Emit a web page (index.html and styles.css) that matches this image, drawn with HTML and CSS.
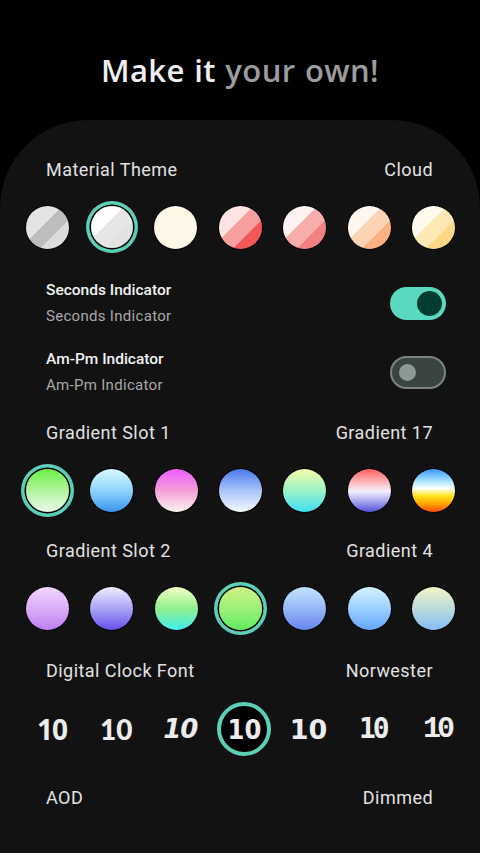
FILE: index.html
```html
<!DOCTYPE html>
<html>
<head>
<meta charset="utf-8">
<link rel="stylesheet" href="styles.css">
</head>
<body>
<header class="hero"><h1><span class="hl">Make it</span> <span class="dim">your own!</span></h1></header>
<main class="card">
  <div class="sec-head"><span>Material Theme</span><span>Cloud</span></div>
  <div class="swatches">
    <span class="sw t1"></span>
    <span class="sw t2 sel"></span>
    <span class="sw t3"></span>
    <span class="sw t4"></span>
    <span class="sw t5"></span>
    <span class="sw t6"></span>
    <span class="sw t7"></span>
  </div>

  <div class="toggle-row first">
    <div class="tt"><div class="title">Seconds Indicator</div><div class="sub">Seconds Indicator</div></div>
    <span class="switch on"><span class="knob"></span></span>
  </div>
  <div class="toggle-row">
    <div class="tt"><div class="title">Am-Pm Indicator</div><div class="sub">Am-Pm Indicator</div></div>
    <span class="switch off"><span class="knob"></span></span>
  </div>

  <div class="sec-head g1"><span>Gradient Slot 1</span><span>Gradient 17</span></div>
  <div class="swatches">
    <span class="sw a1 sel"></span>
    <span class="sw a2"></span>
    <span class="sw a3"></span>
    <span class="sw a4"></span>
    <span class="sw a5"></span>
    <span class="sw a6"></span>
    <span class="sw a7"></span>
  </div>

  <div class="sec-head g2"><span>Gradient Slot 2</span><span>Gradient 4</span></div>
  <div class="swatches">
    <span class="sw b1"></span>
    <span class="sw b2"></span>
    <span class="sw b3"></span>
    <span class="sw b4 sel"></span>
    <span class="sw b5"></span>
    <span class="sw b6"></span>
    <span class="sw b7"></span>
  </div>

  <div class="sec-head g3"><span>Digital Clock Font</span><span>Norwester</span></div>
  <div class="fonts">
    <span class="fi f1">10</span>
    <span class="fi f2">10</span>
    <span class="fi f3">10</span>
    <span class="fi f4 sel">10</span>
    <span class="fi f5">10</span>
    <span class="fi f6">10</span>
    <span class="fi f7">10</span>
  </div>

  <div class="sec-head g4"><span>AOD</span><span>Dimmed</span></div>
</main>
</body>
</html>
```
FILE: styles.css
```css
html, body { margin: 0; padding: 0; }
body {
  background: #000;
  width: 480px;
  height: 853px;
  overflow: hidden;
  font-family: Roboto, "Noto Sans", sans-serif;
}
.hero {
  height: 120px;
  box-sizing: border-box;
  padding-top: 50px;
  text-align: center;
}
.hero h1 {
  margin: 0;
  font-family: "Open Sans", sans-serif;
  font-weight: 600;
  font-size: 31px;
  line-height: 40px;
  letter-spacing: 0.4px;
  word-spacing: 1px;
}
.hl { color: #efefef; }
.dim { color: #9c9c9c; }

.card {
  background: #121212;
  border-radius: 88px 88px 0 0;
  height: 733px;
  box-sizing: border-box;
  padding-top: 38px;
}
.sec-head {
  display: flex;
  justify-content: space-between;
  padding: 0 47px 0 46px;
  height: 24px;
  line-height: 24px;
  font-size: 18px;
  letter-spacing: 0.45px;
  color: #e2e2e2;
}
.sec-head.g1 { margin-top: 26px; }
.sec-head.g2 { margin-top: 22px; }
.sec-head.g3 { margin-top: 24px; }
.sec-head.g4 { margin-top: 30px; }

.swatches {
  display: flex;
  justify-content: space-between;
  align-items: center;
  height: 54px;
  margin-top: 18px;
  padding: 0 25px 0 26px;
}
.sw {
  width: 43px;
  height: 43px;
  border-radius: 50%;
  box-shadow: 0 0 0 1px rgba(0,0,0,0.7);
}
.sw.sel {
  box-shadow: 0 0 0 1.5px #000, 0 0 0 5px #5ccfb6;
}
.sw.t2.sel { width: 42px; height: 42px; }

.t1 { background: linear-gradient(135deg, #e4e4e4 0 42%, #bdbdbd 42% 66%, #dcdcdc 66%); }
.t2 { background: linear-gradient(135deg, #ffffff 0 40%, #e6e6e6 40% 66%, #e2e2e2 66%); }
.t3 { background: #fdf7e8; }
.t4 { background: linear-gradient(135deg, #fde3e3 0 40%, #f8a0a0 40% 66%, #f45858 66%); }
.t5 { background: linear-gradient(135deg, #fff1f1 0 40%, #f9acac 40% 66%, #f28282 66%); }
.t6 { background: linear-gradient(135deg, #fff6f0 0 40%, #fdd3b6 40% 66%, #fbb283 66%); }
.t7 { background: linear-gradient(135deg, #fffaec 0 40%, #ffe9b6 40% 66%, #fdd985 66%); }

.a1 { background: linear-gradient(180deg, #6bf044 0%, #b8f5a6 55%, #eafaea 100%); }
.a2 { background: linear-gradient(180deg, #d8fbff 0%, #8fd4fb 50%, #3a93ee 100%); }
.a3 { background: linear-gradient(180deg, #ee5cff 0%, #f59ed8 50%, #fff4f0 100%); }
.a4 { background: linear-gradient(180deg, #4a78ee 0%, #a8c4f8 50%, #f4faff 100%); }
.a5 { background: linear-gradient(180deg, #f2ffa8 0%, #9ef2c8 50%, #3ee0f2 100%); }
.a6 { background: linear-gradient(180deg, #ff6060 0%, #fbc4c8 35%, #f4f0ff 52%, #b4b0f0 72%, #5252dc 100%); }
.a7 { background: linear-gradient(180deg, #3a98ff 0%, #b8ecff 32%, #ffffff 45%, #ffe620 62%, #ffa800 80%, #ff4a00 100%); }

.b1 { background: linear-gradient(180deg, #f2d8ff 0%, #d8a8f8 55%, #bf80f0 100%); }
.b2 { background: linear-gradient(180deg, #eeeeff 0%, #aaa4f6 50%, #6650ee 100%); }
.b3 { background: linear-gradient(180deg, #f4ffc4 0%, #90f08c 50%, #40eef0 100%); }
.b4 { background: linear-gradient(180deg, #d0f282 0%, #9cf07a 50%, #62ec62 100%); }
.b5 { background: linear-gradient(180deg, #c4e4ff 0%, #94b8f8 50%, #6686ee 100%); }
.b6 { background: linear-gradient(180deg, #d4f2ff 0%, #9cd0ff 50%, #62a6ff 100%); }
.b7 { background: linear-gradient(180deg, #f4f4c4 0%, #bcdcdc 50%, #84bcf4 100%); }

.toggle-row {
  display: flex;
  align-items: center;
  justify-content: space-between;
  padding: 0 34px 0 46px;
  margin-top: 23px;
  height: 46px;
}
.toggle-row.first { margin-top: 26px; }
.title {
  font-size: 15.5px;
  font-weight: 500;
  line-height: 20px;
  color: #f2f2f2;
}
.sub {
  font-size: 15px;
  line-height: 20px;
  margin-top: 6px;
  letter-spacing: 0.3px;
  color: #a9a9a9;
}
.switch {
  width: 56px;
  height: 33px;
  border-radius: 17px;
  box-sizing: border-box;
  display: flex;
  align-items: center;
}
.switch.on {
  background: #5bd9c0;
  justify-content: flex-end;
  padding-right: 4px;
}
.switch.on .knob {
  width: 25px;
  height: 25px;
  border-radius: 50%;
  background: #003c30;
}
.switch.off {
  background: #3a4440;
  border: 2px solid #7b8580;
  padding-left: 7px;
}
.switch.off .knob {
  width: 17px;
  height: 17px;
  border-radius: 50%;
  background: #8c9a93;
}

.fonts {
  display: flex;
  justify-content: space-between;
  align-items: center;
  height: 54px;
  margin-top: 19px;
  padding: 0 16px 0 25px;
}
.fi {
  width: 54px;
  height: 54px;
  box-sizing: border-box;
  border-radius: 50%;
  display: flex;
  align-items: center;
  justify-content: center;
  color: #ececec;
  font-size: 28px;
  line-height: 1;
}
.fi.sel {
  border: 4px solid #5ccfb6;
  background: #000;
}
.f1 { font-family: "Open Sans", sans-serif; font-weight: 700; letter-spacing: -1px; }
.f2 { font-family: "Lato", sans-serif; font-weight: 900; }
.f3 { font-family: "DejaVu Sans", sans-serif; font-weight: 700; font-style: italic; font-size: 26px; letter-spacing: -1px; }
.f4 { font-family: "DejaVu Sans Condensed", "DejaVu Sans", sans-serif; font-weight: 700; font-size: 27px; }
.f5 { font-family: "DejaVu Sans", sans-serif; font-weight: 700; font-size: 27px; }
.f6 { font-family: "DejaVu Sans Mono", monospace; font-weight: 700; font-size: 28px; letter-spacing: -3px; }
.f7 { font-family: "Liberation Mono", monospace; font-weight: 700; font-size: 30px; letter-spacing: -4px; }
```
